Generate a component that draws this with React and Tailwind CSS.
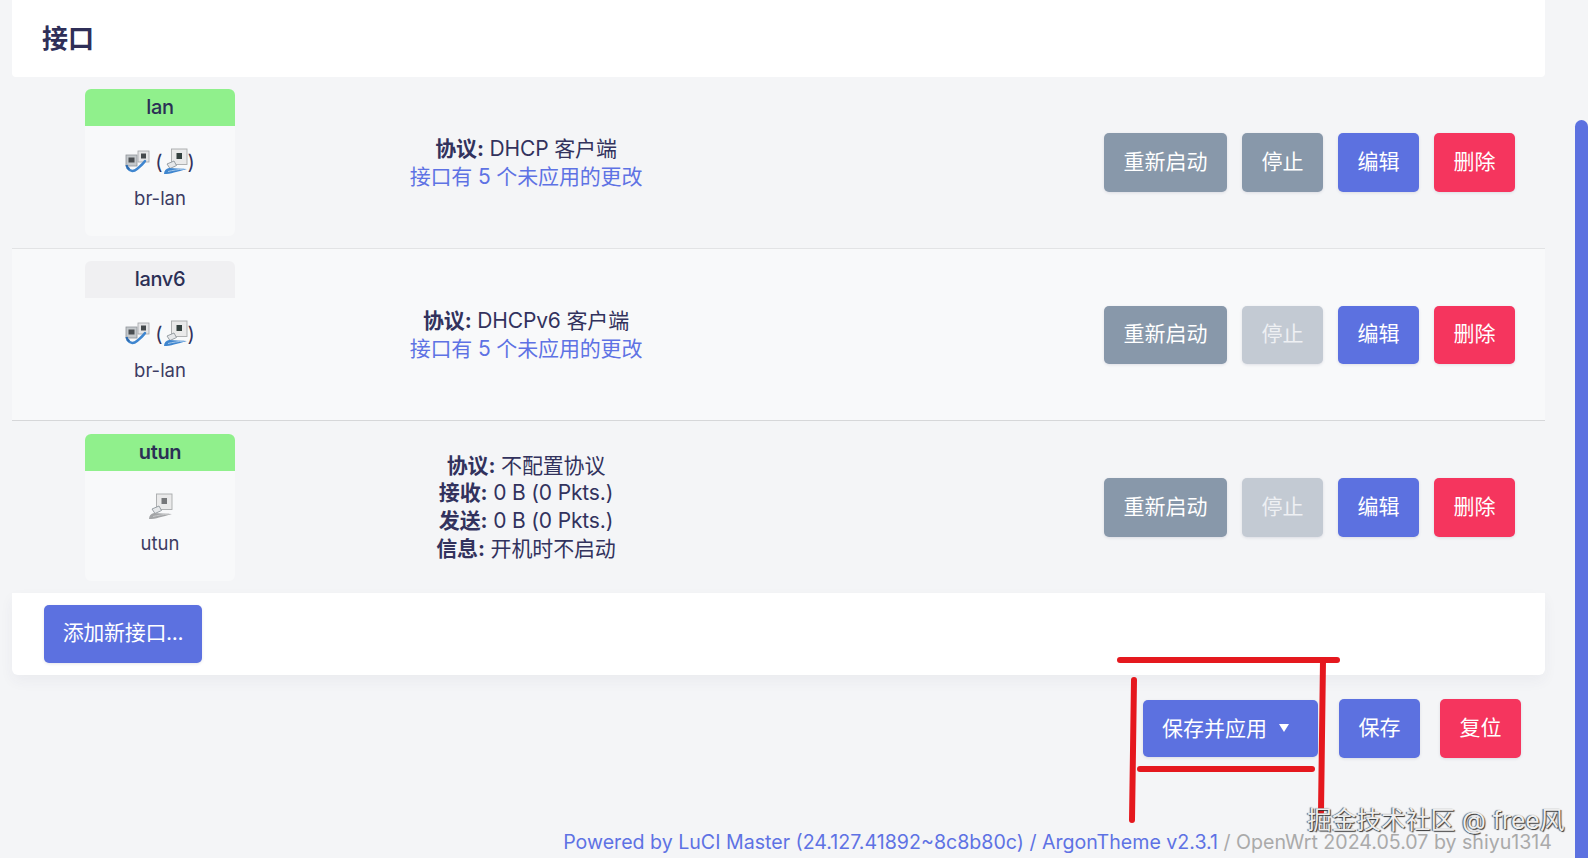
import React from "react";

const base = "font-['Inter','Noto_Sans_CJK_SC',sans-serif]";

function BridgeIcon() {
  return (
    <svg width="25" height="23" viewBox="0 0 25 23" className="shrink-0">
      <rect x="1" y="5" width="11" height="11" fill="#c4c8cb" stroke="#8f959a" strokeWidth="0.8" />
      <rect x="3.500" y="7.500" width="6" height="5" fill="#4a4e52" />
      <rect x="13" y="1" width="11" height="11" fill="#e4e5e6" stroke="#a0a4a7" strokeWidth="0.8" />
      <rect x="16" y="3.500" width="5" height="5" fill="#44494c" />
      <path d="M2.500 18c3 4 6.500 3.500 9.500 1s6-5 8-8" fill="none" stroke="#3f86cf" strokeWidth="2.400" strokeLinecap="round" />
      <path d="M1.500 15c.5 2 1.500 3.500 3 4" fill="none" stroke="#2f6cb0" strokeWidth="2.200" />
    </svg>
  );
}

function PortIcon({ gray }) {
  const cable = gray ? "#a3a5a7" : "#3f86cf";
  const cable2 = gray ? "#c8c9ca" : "#a5c8ea";
  return (
    <svg width="25" height="27" viewBox="0 0 25 27" className="shrink-0">
      <rect x="8.500" y="1" width="15.500" height="15.500" fill="#eaeaea" stroke="#a8aaac" strokeWidth="0.9" />
      <rect x="13.500" y="5" width="5.500" height="6" fill={gray ? "#76787a" : "#34413f"} />
      <path d="M4 16l7-3 2.500 4.500-6.500 3z" fill="#e6e8ea" stroke="#8f969c" strokeWidth="0.9" />
      <path d="M1 26c0-3.500 2-5 5-6 6 0 11 1 18 1-5 1.500-9 2.500-13 3.500-3 1-7 1.500-10 1.500z" fill={cable} />
      <path d="M5 23.500c4-1 10-2 16-2.500" fill="none" stroke={cable2} strokeWidth="1" />
    </svg>
  );
}

function Btn({ children, tone, w, h = "h-[59px]", extra = "pb-[2px]" }) {
  const tones = {
    gray: "bg-[#8898aa]",
    off: "bg-[#c3cad3]",
    blue: "bg-[#5c71e0]",
    red: "bg-[#f5355e]",
  };
  const fg = tone === "off" ? "text-[#eef0f3]" : "text-white";
  return (
    <div className={`${tones[tone]} ${fg} ${h} ${w} ${extra} rounded-[5px] flex items-center justify-center text-[21px] leading-none shadow-[0_1px_3px_rgba(50,50,93,0.12)]`}>
      {children}
    </div>
  );
}

function Badge({ name, up, strong, gray, bridge, dev }) {
  return (
    <div className="w-[150px] h-[147px] shrink-0 rounded-[6px] bg-[#f8f9fa] flex flex-col items-center overflow-hidden">
      <div className={`w-full h-[37px] pb-[1px] flex items-center justify-center text-[20px] tracking-[-0.3px] text-[#2b2f55] ${strong ? "font-semibold" : "font-medium"} ${up ? "bg-[#90f08c]" : "bg-[#f0f0f2]"}`}>
        {name}
      </div>
      <div className="h-[27px] mt-[22px] flex items-center text-[20px] text-[#32325d]">
        {bridge ? (
          <>
            <BridgeIcon />
            <span className="ml-[5px] leading-none">(</span>
            <PortIcon />
            <span className="leading-none">)</span>
          </>
        ) : (
          <PortIcon gray={gray} />
        )}
      </div>
      <div className="mt-[10px] text-[18.5px] leading-[26px] text-[#3c3c62]">{dev}</div>
    </div>
  );
}

function Row({ badge, lines, stopOff, bg, h, btnH, border }) {
  return (
    <div className={`${bg} ${h} ${border} flex items-center pl-[73px] pr-[30px]`}>
      <Badge {...badge} />
      <div className="w-[582px] shrink-0 text-center text-[21px] leading-[27.7px] tracking-[-0.15px] text-[#32325d]">
        {lines.map((l, i) =>
          l.link ? (
            <div key={i} className="text-[#5e72e4]">{l.link}</div>
          ) : (
            <div key={i}><span className="font-bold">{l.k}:</span> {l.v}</div>
          )
        )}
      </div>
      <div className="ml-auto flex gap-[15px]">
        <Btn tone="gray" w="w-[123px]" h={btnH}>重新启动</Btn>
        <Btn tone={stopOff ? "off" : "gray"} w="w-[81px]" h={btnH}>停止</Btn>
        <Btn tone="blue" w="w-[81px]" h={btnH}>编辑</Btn>
        <Btn tone="red" w="w-[81px]" h={btnH}>删除</Btn>
      </div>
    </div>
  );
}

const pending = "接口有 5 个未应用的更改";

export default function App() {
  return (
    <div className={`relative w-[1588px] h-[858px] overflow-hidden flex bg-[#f4f5f7] ${base}`}>
      <main className="flex-1 min-w-0 pl-[12px]">
        <div className="mr-[30px]">
          <div className="h-[77px] bg-white rounded-b-[4px] flex items-center pl-[30px] text-[26px] font-bold text-[#2f2f58]">接口</div>
          <Row
            bg="bg-[#f4f5f7]" h="h-[172px]" border="border-b border-[#e2e3e5]"
            badge={{ name: "lan", up: true, bridge: true, dev: "br-lan" }}
            lines={[{ k: "协议", v: "DHCP 客户端" }, { link: pending }]}
          />
          <Row
            bg="bg-[#f8f9fa]" h="h-[172px]" btnH="h-[58px]" border="border-b border-[#d6d7d9]" stopOff
            badge={{ name: "lanv6", bridge: true, dev: "br-lan" }}
            lines={[{ k: "协议", v: "DHCPv6 客户端" }, { link: pending }]}
          />
          <Row
            bg="bg-[#f4f5f7]" h="h-[172px]" stopOff
            badge={{ name: "utun", up: true, strong: true, gray: true, dev: "utun" }}
            lines={[
              { k: "协议", v: "不配置协议" },
              { k: "接收", v: "0 B (0 Pkts.)" },
              { k: "发送", v: "0 B (0 Pkts.)" },
              { k: "信息", v: "开机时不启动" },
            ]}
          />
          <div className="h-[82px] bg-white rounded-b-[6px] shadow-[0_6px_14px_rgba(50,50,93,0.05)] flex items-center pl-[32px]">
            <Btn tone="blue" w="w-[158px]" h="h-[58px]" extra="pb-[4px] tracking-[-0.3px]">添加新接口...</Btn>
          </div>
        </div>

        <div className="mt-[24px] mr-[54px] flex justify-end items-center h-[59px]">
          <div className="w-[175px] h-[57px] rounded-[5px] bg-[#5c71e0] text-white text-[21px] flex items-center pl-[19px] shadow-[0_1px_3px_rgba(50,50,93,0.12)]">
            <span>保存并应用</span>
            <span className="ml-[12px] mb-[2px] w-0 h-0 border-x-[5px] border-x-transparent border-t-[8px] border-t-white" />
          </div>
          <div className="ml-[21px]"><Btn tone="blue" w="w-[81px]">保存</Btn></div>
          <div className="ml-[20px]"><Btn tone="red" w="w-[81px]">复位</Btn></div>
        </div>

        <div className="mt-[70px] mr-[23px] text-right text-[19.6px] leading-[28px] whitespace-nowrap text-[#aaaaaa]">
          <span className="text-[#5e72e4]">Powered by LuCI Master (24.127.41892~8c8b80c) / ArgonTheme v2.3.1</span> / OpenWrt 2024.05.07 by shiyu1314
        </div>
      </main>

      <div className="w-[13px] shrink-0 pt-[120px]">
        <div className="h-full bg-[#5c71e0] rounded-t-[7px]" />
      </div>

      <svg className="absolute inset-0 pointer-events-none" width="1588" height="858" viewBox="0 0 1588 858">
        <g stroke="#e5181e" strokeWidth="6" strokeLinecap="round" fill="none">
          <path d="M1120 660H1337" />
          <path d="M1134 680L1132 820" />
          <path d="M1140 769H1312" />
          <path d="M1323 660L1321 812" />
        </g>
      </svg>
      <div className="absolute left-[1307px] top-[804px] text-[24.7px] leading-[32px] whitespace-nowrap text-[#eeeeee] [text-shadow:1px_1px_1px_#333,-1px_0_1px_#555]">
        掘金技术社区 @ free风
      </div>
    </div>
  );
}
